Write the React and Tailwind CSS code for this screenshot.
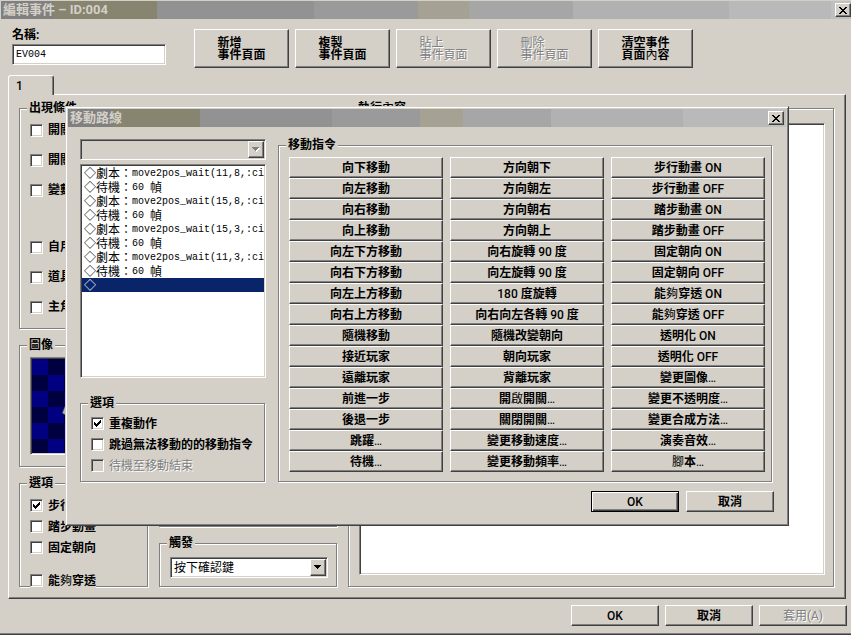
import React from "react";
import clsx from "clsx";

const RAISED =
  "border border-t-white border-l-white border-r-[#404040] border-b-[#404040] shadow-[inset_-1px_-1px_0_#808080]";
const SUNKEN =
  "border border-t-[#808080] border-l-[#808080] border-r-white border-b-white shadow-[inset_1px_1px_0_#404040,inset_-1px_-1px_0_#d4d0c8]";
const ETCHED = "text-[#808080] font-normal text-shadow-[1px_1px_0_#fff]";

const COMMANDS = [
  [
    "向下移動", "向左移動", "向右移動", "向上移動", "向左下方移動",
    "向右下方移動", "向左上方移動", "向右上方移動", "隨機移動", "接近玩家",
    "遠離玩家", "前進一步", "後退一步", "跳躍…", "待機…",
  ],
  [
    "方向朝下", "方向朝左", "方向朝右", "方向朝上", "向右旋轉 90 度",
    "向左旋轉 90 度", "180 度旋轉", "向右向左各轉 90 度", "隨機改變朝向", "朝向玩家",
    "背離玩家", "開啟開關…", "關閉開關…", "變更移動速度…", "變更移動頻率…",
  ],
  [
    "步行動畫 ON", "步行動畫 OFF", "踏步動畫 ON", "踏步動畫 OFF", "固定朝向 ON",
    "固定朝向 OFF", "能夠穿透 ON", "能夠穿透 OFF", "透明化 ON", "透明化 OFF",
    "變更圖像…", "變更不透明度…", "變更合成方法…", "演奏音效…", "腳本…",
  ],
];

// cjk / latin pieces alternate, starting with cjk
const ROUTE = [
  ["◇劇本：", "move2pos_wait(11,8,:ci"],
  ["◇待機：", "60 ", "幀"],
  ["◇劇本：", "move2pos_wait(15,8,:ci"],
  ["◇待機：", "60 ", "幀"],
  ["◇劇本：", "move2pos_wait(15,3,:ci"],
  ["◇待機：", "60 ", "幀"],
  ["◇劇本：", "move2pos_wait(11,3,:ci"],
  ["◇待機：", "60 ", "幀"],
  ["◇"],
];

// a few characters are missing from the bold face and come out light,
// latin text sits between the two weights
function Caption({ text, disabled }) {
  if (disabled) return text;
  return text.split(/([內夠啟腳…]|[A-Z0-9]+)/).map((part, i) =>
    i % 2 ? (
      <span key={i} className={/[A-Z0-9]/.test(part) ? "font-medium" : "font-normal"}>{part}</span>
    ) : (
      part
    )
  );
}

function CloseButton() {
  return (
    <button aria-label="Close" className={clsx("flex h-[14px] w-4 items-center justify-center bg-[#d4d0c8]", RAISED)}>
      <svg width="8" height="7" viewBox="0 0 8 7" shapeRendering="crispEdges">
        <path
          d="M0 0h2v1H0zM6 0h2v1H6zM1 1h2v1H1zM5 1h2v1H5zM2 2h4v1H2zM3 3h2v1H3zM2 4h4v1H2zM1 5h2v1H1zM5 5h2v1H5zM0 6h2v1H0zM6 6h2v1H6z"
          fill="#000"
        />
      </svg>
    </button>
  );
}

function TitleBar({ title, className }) {
  return (
    <div
      className={clsx(
        "flex h-[18px] items-center justify-between bg-[linear-gradient(90deg,#808080_0_6.2%,#878470_6.2%_18.4%,#929292_18.4%_36.8%,#9a9a9a_36.8%_49%,#a5a193_49%_55%,#a6a6a6_55%_67.3%,#b1b1b1_67.3%_85.6%,#b9b9b9_85.6%_97.6%,#c0c0c0_97.6%)] pl-[2px]",
        className
      )}
    >
      <h2 className="text-[13px] leading-[18px] font-bold text-[#d4d0c8]">{title}</h2>
      <CloseButton />
    </div>
  );
}

function Button({ text, className, disabled, primary }) {
  return (
    <button
      disabled={disabled}
      className={clsx(
        "flex items-center justify-center",
        primary
          ? "border border-black shadow-[inset_1px_1px_0_#fff,inset_-1px_-1px_0_#404040,inset_-2px_-2px_0_#808080]"
          : RAISED,
        disabled && ETCHED,
        className
      )}
    >
      <span className="text-left leading-3 whitespace-pre"><Caption text={text} disabled={disabled} /></span>
    </button>
  );
}

function Group({ title, className, children }) {
  return (
    <fieldset
      className={clsx(
        "min-w-0 border border-[#808080] pl-[10px] shadow-[1px_1px_0_#fff,inset_1px_1px_0_#fff]",
        className
      )}
    >
      <legend className="-ml-[3px] bg-[#d4d0c8] px-[2px] leading-[11px]"><Caption text={title} /></legend>
      {children}
    </fieldset>
  );
}

function Checkbox({ label, checked, disabled, className = "h-[21px]" }) {
  return (
    <label className={clsx("flex w-fit items-center gap-[5px] leading-3 whitespace-nowrap", className)}>
      <span className="grid">
        <input
          type="checkbox"
          defaultChecked={checked}
          disabled={disabled}
          className={clsx(
            "peer col-start-1 row-start-1 size-[13px] appearance-none",
            disabled ? "bg-[#d4d0c8]" : "bg-white",
            SUNKEN
          )}
        />
        <svg
          className="pointer-events-none col-start-1 row-start-1 hidden peer-checked:block"
          width="13" height="13" viewBox="0 0 13 13" shapeRendering="crispEdges"
        >
          <path d="M3 5h1v3H3zM4 6h1v3H4zM5 7h1v3H5zM6 6h1v3H6zM7 5h1v3H7zM8 4h1v3H8zM9 3h1v3H9z" fill="#000" />
        </svg>
      </span>
      <span className={clsx(disabled && ETCHED)}><Caption text={label} disabled={disabled} /></span>
    </label>
  );
}

function Select({ label, options, disabled }) {
  return (
    <div className="relative">
      <select
        aria-label={label}
        disabled={disabled}
        className={clsx(
          "block h-[21px] w-full appearance-none pl-[3px] text-xs font-normal",
          disabled ? "bg-[#d4d0c8]" : "bg-white",
          SUNKEN
        )}
      >
        {options.map((o) => <option key={o}>{o}</option>)}
      </select>
      <span className={clsx("pointer-events-none absolute top-[2px] right-[2px] flex h-[17px] w-4 items-center justify-center bg-[#d4d0c8]", RAISED)}>
        <svg width="8" height="5" viewBox="0 0 8 5" shapeRendering="crispEdges">
          {disabled && <path d="M1 1h7v1H1zM2 2h5v1H2zM3 3h3v1H3zM4 4h1v1H4z" fill="#fff" />}
          <path d="M0 0h7v1H0zM1 1h5v1H1zM2 2h3v1H2zM3 3h1v1H3z" fill={disabled ? "#808080" : "#000"} />
        </svg>
      </span>
    </div>
  );
}

function MoveRoute() {
  return (
    <div
      role="dialog"
      aria-label="移動路線"
      className="absolute top-[106px] right-[62px] left-[65px] border border-t-[#d4d0c8] border-l-[#d4d0c8] border-r-[#404040] border-b-[#404040] bg-[#d4d0c8] p-[2px] shadow-[inset_1px_1px_0_#fff,inset_-1px_-1px_0_#808080]"
    >
      <TitleBar title="移動路線" className="pr-[2px]" />
      <div className="flex items-start gap-3 pt-3 pr-[14px] pl-3">
        <div className="w-[186px] shrink-0">
          <Select label="對象" options={[""]} disabled />
          <ul role="listbox" aria-label="移動路線" className={clsx("mt-1 h-[214px] overflow-hidden bg-white p-px font-normal", SUNKEN)}>
            {ROUTE.map((parts, i) => {
              const selected = i === ROUTE.length - 1;
              return (
                <li
                  key={i}
                  role="option"
                  aria-selected={selected}
                  className={clsx(
                    "flex h-[14px] items-start pt-px pl-[2px] whitespace-pre",
                    selected && "bg-[#0a246a] text-white"
                  )}
                >
                  {parts.map((p, j) => (
                    <span
                      key={j}
                      className={clsx(
                        "leading-[14px]",
                        j % 2 && "font-['Liberation_Mono',monospace] text-[10px]"
                      )}
                    >
                      {p}
                    </span>
                  ))}
                </li>
              );
            })}
          </ul>
          <Group title="選項" className="mt-5 mr-px pt-1 pb-[5px]">
            <Checkbox label="重複動作" checked />
            <Checkbox label="跳過無法移動的的移動指令" />
            <Checkbox label="待機至移動結束" disabled />
          </Group>
        </div>
        <Group title="移動指令" className="mt-px flex-1 pt-[6px] pr-[6px] pb-[9px]">
          <div className="grid grid-cols-3 gap-[7px]">
            {COMMANDS.map((column, i) => (
              <div key={i} className="flex flex-col">
                {column.map((c) => <Button key={c} text={c} className="h-[21px]" />)}
              </div>
            ))}
          </div>
        </Group>
      </div>
      <div className="flex justify-end gap-[7px] pt-[9px] pr-3 pb-[11px]">
        <Button text="OK" primary className="h-[21px] w-[88px]" />
        <Button text="取消" className="h-[21px] w-[88px]" />
      </div>
    </div>
  );
}

function Sprite() {
  return (
    <div className={clsx("h-[98px] w-[108px] p-px", SUNKEN)}>
      <div className="flex h-full items-center justify-center bg-[repeating-conic-gradient(#000040_0_25%,#000080_0_50%)] bg-[length:32px_32px]">
        <svg width="44" height="48" viewBox="0 0 44 48">
          <path d="M0 31l3-7 6-4 8-14h10l8 16 5 8-9 4-4 12H15l-4-11-8-2z" fill="#6f6d66" />
          <path d="M1 31l2-6 5-3-3 11z" fill="#b9b6ac" />
        </svg>
      </div>
    </div>
  );
}

export default function App() {
  return (
    <div className="relative flex min-h-screen flex-col overflow-hidden border-b border-[#404040] bg-[#d4d0c8] pt-px pb-[8px] pl-px font-['Roboto','Noto_Sans_CJK_TC',sans-serif] text-xs leading-3 font-bold text-black shadow-[inset_0_-1px_0_#808080]">
      <TitleBar title="編輯事件 – ID:004" />

      <div className="flex items-start pt-[10px] pl-[11px]">
        <div className="flex w-[154px] flex-col gap-[3px]">
          <label htmlFor="name">名稱:</label>
          <input
            id="name"
            defaultValue="EV004"
            className={clsx("h-[21px] bg-white px-[3px] font-['Liberation_Mono',monospace] text-[10px] font-normal", SUNKEN)}
          />
        </div>
        <div className="ml-7 flex gap-[6px]">
          <Button text={"新增\n事件頁面"} className="h-[39px] w-[95px]" />
          <Button text={"複製\n事件頁面"} className="h-[39px] w-[95px]" />
          <Button text={"貼上\n事件頁面"} className="h-[39px] w-[95px]" disabled />
          <Button text={"刪除\n事件頁面"} className="h-[39px] w-[95px]" disabled />
          <Button text={"清空事件\n頁面內容"} className="h-[39px] w-[95px]" />
        </div>
      </div>

      <div className="mt-[7px] mr-[5px] ml-[7px]">
        <button className="relative -mb-px block h-5 w-[46px] rounded-t-[3px] border border-b-0 border-t-white border-l-white border-r-[#404040] bg-[#d4d0c8] pl-[7px] text-left font-medium shadow-[inset_-1px_0_0_#808080]">
          1
        </button>
        <div className={clsx("flex gap-[10px] pt-2 pr-[11px] pb-[11px] pl-[10px]", RAISED)}>
          <div className="w-[319px] shrink-0">
            <Group title="出現條件" className="mr-px pt-px pb-[6px]">
              <Checkbox label="開關" className="h-[30px]" />
              <Checkbox label="開關" className="h-[30px]" />
              <Checkbox label="變數" className="h-[30px]" />
              <Checkbox label="自用開關" className="mt-[27px] h-[30px]" />
              <Checkbox label="道具" className="h-[30px]" />
              <Checkbox label="主角" className="h-[30px]" />
            </Group>
            <div className="mt-[11px] mr-px flex gap-[11px]">
              <div className="flex w-[129px] flex-col gap-[11px]">
                <Group title="圖像" className="pt-[6px] pb-[11px]">
                  <Sprite />
                </Group>
                <Group title="選項" className="h-[109px] pt-[6px]">
                  <Checkbox label="步行動畫" checked />
                  <Checkbox label="踏步動畫" />
                  <Checkbox label="固定朝向" />
                  <Checkbox label="能夠穿透" className="mt-3 h-[21px] bg-[#d4d0c8]" />
                </Group>
              </div>
              <div className="flex flex-1 flex-col gap-[11px]">
                <Group title="自律移動" className="flex-1" />
                <Group title="觸發" className="pt-2 pr-2 pb-2">
                  <Select label="觸發" options={["按下確認鍵"]} />
                </Group>
              </div>
            </div>
          </div>
          <Group title="執行內容" className="flex flex-1 flex-col pt-[9px] pr-2 pb-[11px]">
            <div className={clsx("w-full flex-1 bg-white", SUNKEN)} />
          </Group>
        </div>
      </div>

      <div className="flex justify-end gap-[6px] pt-[6px] pr-1">
        <Button text="OK" className="h-[21px] w-[88px]" />
        <Button text="取消" className="h-[21px] w-[88px]" />
        <Button text="套用(A)" className="h-[21px] w-[88px]" disabled />
      </div>

      <MoveRoute />
    </div>
  );
}
